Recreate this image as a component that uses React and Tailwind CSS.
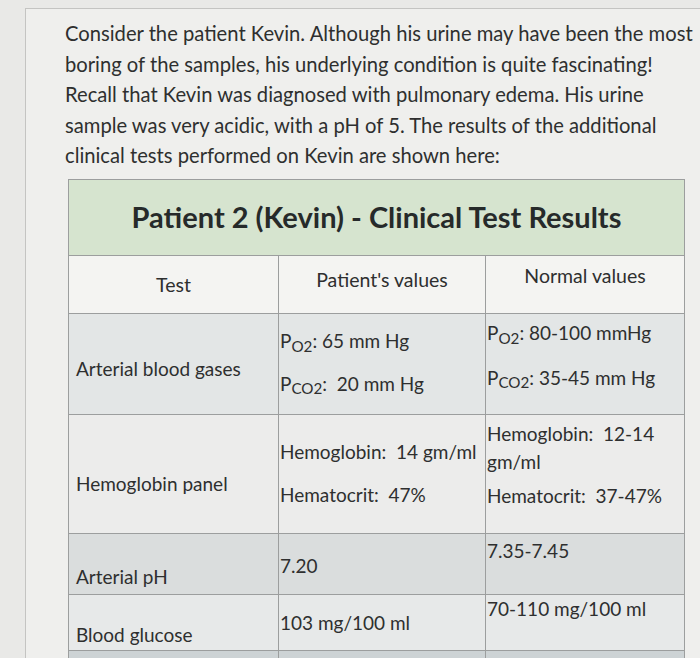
import React from "react";

const Sub = ({ children }) => <sub className="text-[0.8em]">{children}</sub>;

// one table row: three cells, the columns have their own vertical offsets
const Row = ({ h, bg, left, mid, right, leftPad = "pt-[20px]", midPad = "", rightPad = "pb-[20px]" }) => (
  <div className={`grid grid-cols-[210px_207px_1fr] border-t border-[#9c9e9e] ${bg}`} style={{ height: h }}>
    <div className={`flex flex-col justify-center pl-[7px] border-r border-[#9c9e9e] ${leftPad}`}>{left}</div>
    <div className={`flex flex-col justify-center pl-[1px] border-r border-[#9c9e9e] ${midPad}`}>{mid}</div>
    <div className={`flex flex-col justify-center pl-[1px] ${rightPad}`}>{right}</div>
  </div>
);

export default function App() {
  return (
    <div className="min-h-[658px] bg-[#e9e9e7] pt-[8px] font-['Lato',sans-serif] text-[#2e2f2f] overflow-hidden">
      <div className="ml-[25px] min-h-[650px] border-t border-l border-[#c4c4c2] bg-[#efefed] pl-[39px] pt-[9px]">
        {/* intro paragraph */}
        <p className="text-[20.2px] leading-[30.5px] whitespace-nowrap">
          Consider the patient Kevin. Although his urine may have been the most
          <br />
          boring of the samples, his underlying condition is quite fascinating!
          <br />
          Recall that Kevin was diagnosed with pulmonary edema. His urine
          <br />
          sample was very acidic, with a pH of 5. The results of the additional
          <br />
          clinical tests performed on Kevin are shown here:
        </p>

        {/* results table */}
        <div className="mt-[8px] ml-[3px] w-[617px] border border-[#9c9e9e] text-[19px]">
          <div className="h-[75px] flex items-center justify-center bg-[#d6e4cf]">
            <h2 className="text-[29px] font-bold text-[#262a2a]">Patient 2 (Kevin) - Clinical Test Results</h2>
          </div>

          <div className="grid grid-cols-[210px_207px_1fr] h-[58px] border-t border-[#9c9e9e] bg-[#f4f4f2] text-center text-[19.5px]">
            <div className="flex items-center justify-center pt-[2px] border-r border-[#9c9e9e]">Test</div>
            <div className="flex items-center justify-center pb-[8px] border-r border-[#9c9e9e]">Patient's values</div>
            <div className="flex items-center justify-center pb-[16px]">Normal values</div>
          </div>

          <Row
            h={101}
            bg="bg-[#e3e6e6]"
            left={<span>Arterial blood gases</span>}
            mid={
              <div className="flex flex-col gap-[14px]">
                <span>
                  P<Sub>O2</Sub>: 65 mm Hg
                </span>
                <span>
                  P<Sub>CO2</Sub>:&nbsp; 20 mm Hg
                </span>
              </div>
            }
            right={
              <div className="flex flex-col gap-[16px]">
                <span>
                  P<Sub>O2</Sub>: 80-100 mmHg
                </span>
                <span>
                  P<Sub>CO2</Sub>: 35-45 mm Hg
                </span>
              </div>
            }
            leftPad="pt-[12px]"
            midPad="pb-[2px]"
            rightPad="pb-[16px]"
          />

          <Row
            h={119}
            bg="bg-[#ececeb]"
            left={<span>Hemoglobin panel</span>}
            mid={
              <div className="flex flex-col gap-[14px]">
                <span>Hemoglobin:&nbsp; 14 gm/ml</span>
                <span>Hematocrit:&nbsp; 47%</span>
              </div>
            }
            right={
              <div className="flex flex-col gap-[6px]">
                <span className="leading-[28px]">
                  Hemoglobin:&nbsp; 12-14
                  <br />
                  gm/ml
                </span>
                <span>Hematocrit:&nbsp; 37-47%</span>
              </div>
            }
            leftPad="pt-[22px]"
            rightPad="pb-[16px]"
          />

          <Row
            h={61}
            bg="bg-[#dadddd]"
            left={<span>Arterial pH</span>}
            mid={<span>7.20</span>}
            right={<span>7.35-7.45</span>}
            leftPad="pt-[28px]"
            midPad="pt-[6px]"
            rightPad="pb-[24px]"
          />

          <Row
            h={56}
            bg="bg-[#e7e9e9]"
            left={<span>Blood glucose</span>}
            mid={<span>103 mg/100 ml</span>}
            right={<span>70-110 mg/100 ml</span>}
            leftPad="pt-[16px]"
            midPad="pb-[8px]"
            rightPad="pb-[36px]"
          />

          <Row h={40} bg="bg-[#cdd3d5]" left={null} mid={null} right={null} />
        </div>
      </div>
    </div>
  );
}
